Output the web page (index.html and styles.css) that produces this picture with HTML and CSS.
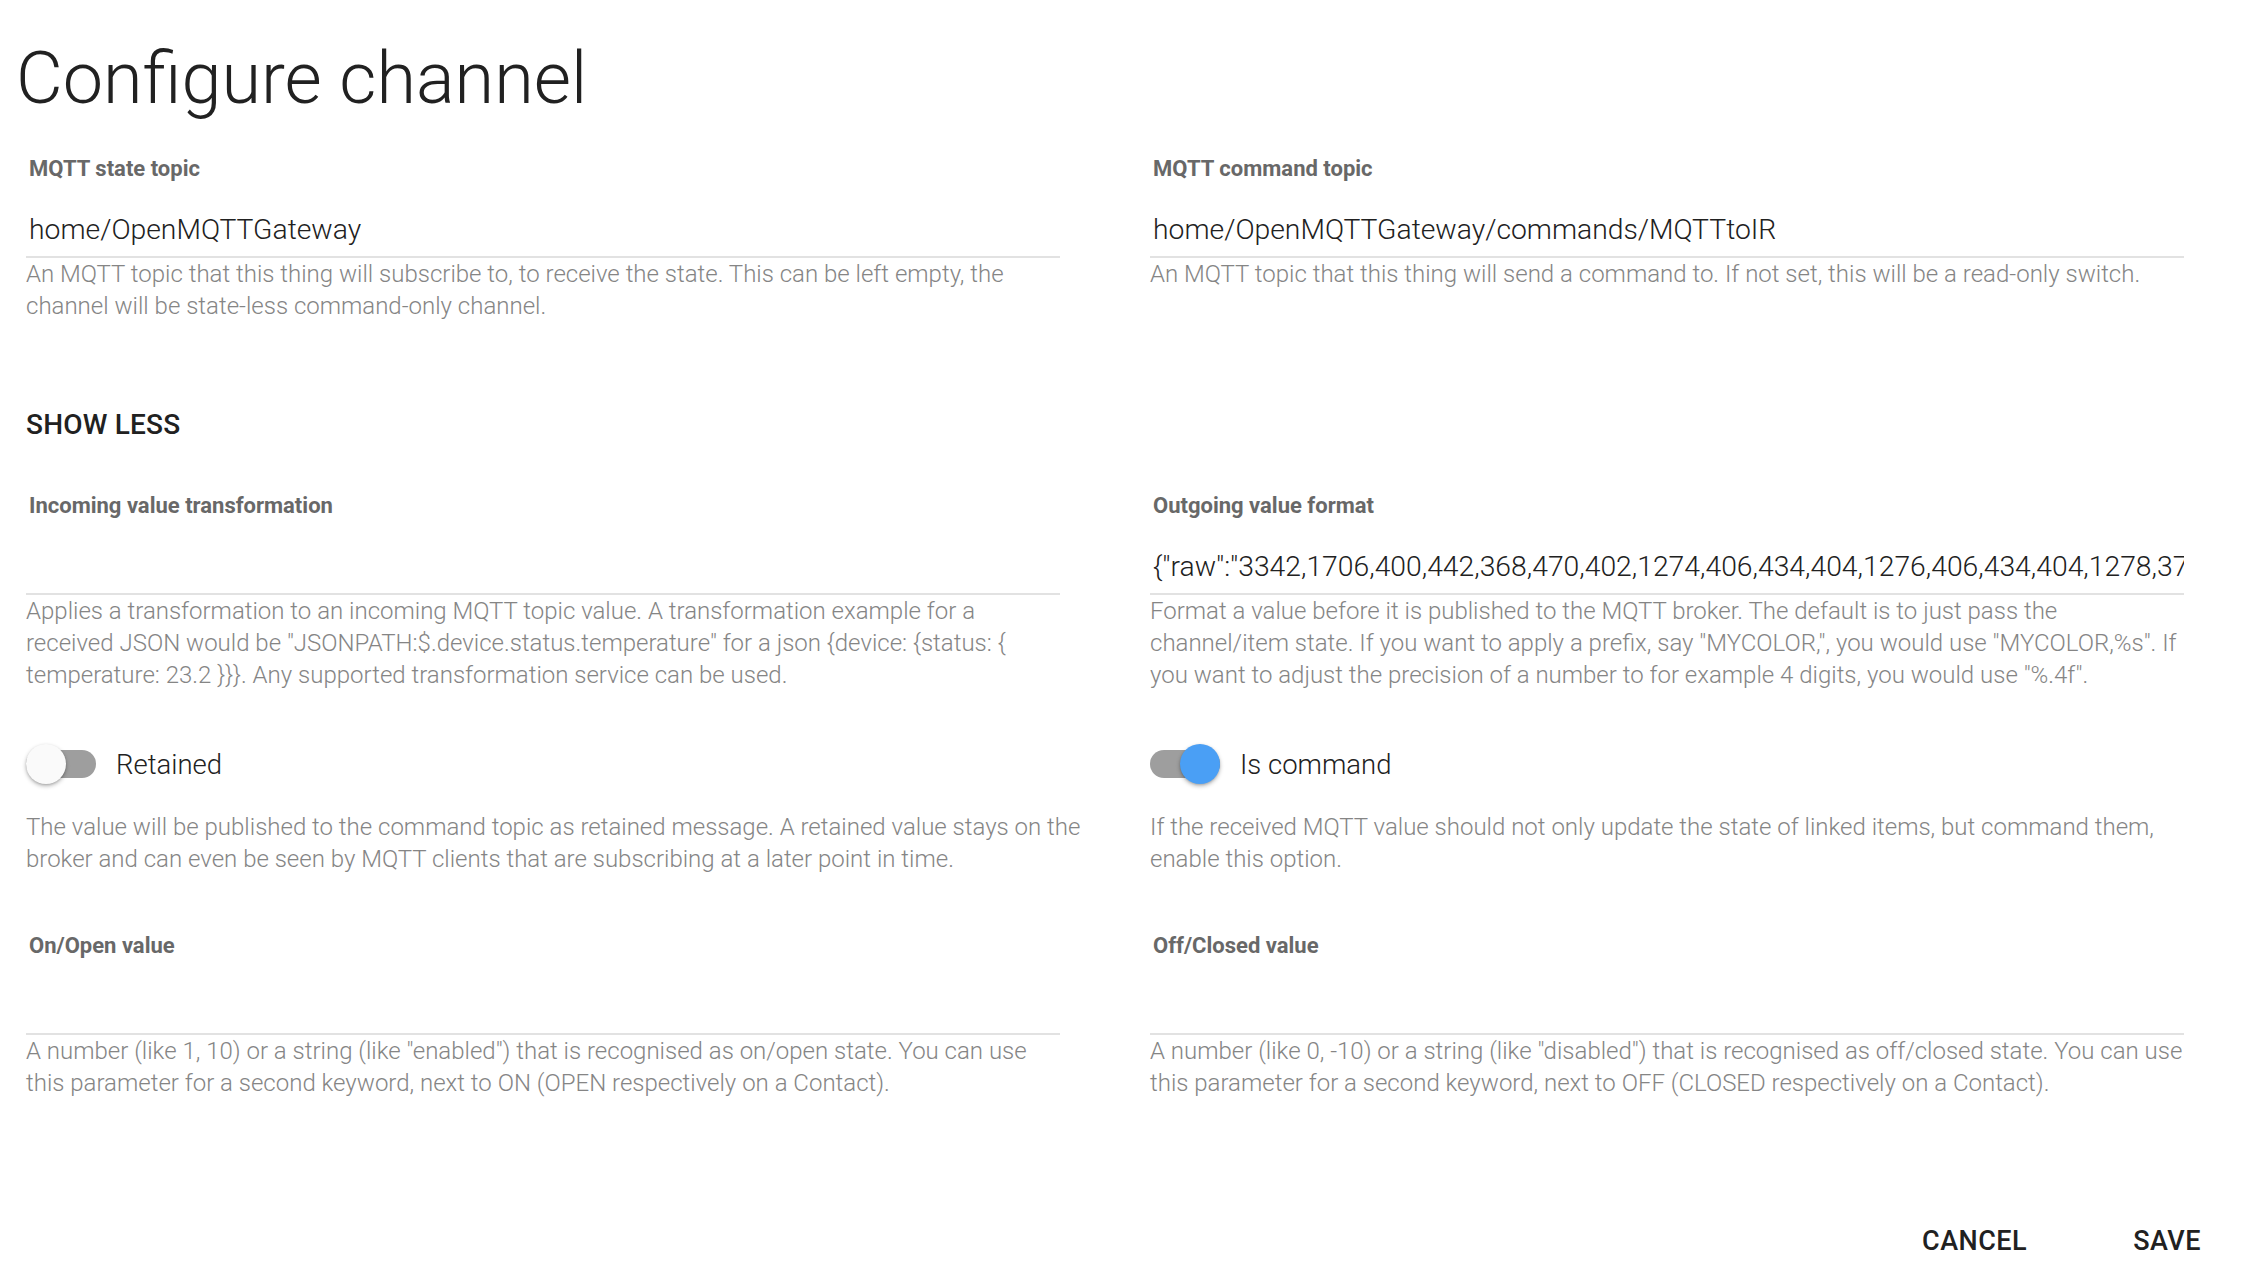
FILE: index.html
```html
<!DOCTYPE html>
<html lang="en">
<head>
<meta charset="utf-8">
<title>Configure channel</title>
<link rel="stylesheet" href="styles.css">
</head>
<body>
<div class="page">
  <h1 class="title">Configure channel</h1>

  <div class="grid row-1">
    <div class="field">
      <div class="label">MQTT state topic</div>
      <div class="input">home/OpenMQTTGateway</div>
      <div class="desc">An MQTT topic that this thing will subscribe to, to receive the state. This can be left empty, the channel will be state-less command-only channel.</div>
    </div>
    <div class="field">
      <div class="label">MQTT command topic</div>
      <div class="input">home/OpenMQTTGateway/commands/MQTTtoIR</div>
      <div class="desc">An MQTT topic that this thing will send a command to. If not set, this will be a read-only switch.</div>
    </div>
  </div>

  <div class="show-less">SHOW LESS</div>

  <div class="grid row-2">
    <div class="field">
      <div class="label">Incoming value transformation</div>
      <div class="input"></div>
      <div class="desc">Applies a transformation to an incoming MQTT topic value. A transformation example for a received JSON would be "JSONPATH:$.device.status.temperature" for a json {device: {status: { temperature: 23.2 }}}. Any supported transformation service can be used.</div>
    </div>
    <div class="field">
      <div class="label">Outgoing value format</div>
      <div class="input">{"raw":"3342,1706,400,442,368,470,402,1274,406,434,404,1276,406,434,404,1278,372,470,400,442,368,1306,402,440,370,470,400,1278,402,438,400"}</div>
      <div class="desc">Format a value before it is published to the MQTT broker. The default is to just pass the channel/item state. If you want to apply a prefix, say "MYCOLOR,", you would use "MYCOLOR,%s". If you want to adjust the precision of a number to for example 4 digits, you would use "%.4f".</div>
    </div>
  </div>

  <div class="grid row-3">
    <div class="toggle-field">
      <div class="toggle-row">
        <span class="switch"><span class="track"></span><span class="thumb"></span></span>
        <span class="toggle-label">Retained</span>
      </div>
      <div class="desc">The value will be published to the command topic as retained message. A retained value stays on the broker and can even be seen by MQTT clients that are subscribing at a later point in time.</div>
    </div>
    <div class="toggle-field">
      <div class="toggle-row">
        <span class="switch on"><span class="track"></span><span class="thumb"></span></span>
        <span class="toggle-label">Is command</span>
      </div>
      <div class="desc">If the received MQTT value should not only update the state of linked items, but command them, enable this option.</div>
    </div>
  </div>

  <div class="grid row-4">
    <div class="field">
      <div class="label">On/Open value</div>
      <div class="input"></div>
      <div class="desc">A number (like 1, 10) or a string (like "enabled") that is recognised as on/open state. You can use this parameter for a second keyword, next to ON (OPEN respectively on a Contact).</div>
    </div>
    <div class="field">
      <div class="label">Off/Closed value</div>
      <div class="input"></div>
      <div class="desc">A number (like 0, -10) or a string (like "disabled") that is recognised as off/closed state. You can use this parameter for a second keyword, next to OFF (CLOSED respectively on a Contact).</div>
    </div>
  </div>

  <div class="actions">
    <span class="btn">CANCEL</span>
    <span class="btn">SAVE</span>
  </div>
</div>
</body>
</html>
```

FILE: styles.css
```css
* { box-sizing: content-box; }
html, body {
  margin: 0;
  padding: 0;
  background: #ffffff;
}
body {
  font-family: Roboto, "Liberation Sans", sans-serif;
  color: #212121;
}
.page {
  padding: 0 50px 0 26px;
}
.title {
  margin: 36px 0 0 -10px;
  font-size: 72px;
  line-height: 86px;
  font-weight: 300;
  color: #212121;
}
.grid {
  display: grid;
  grid-template-columns: 1062px 1062px;
  column-gap: 62px;
}
.row-1 { margin-top: 35px; }
.row-2 { margin-top: 51px; }
.row-3 { margin-top: 53px; }
.row-4 { margin-top: 59px; }

.field {
  width: 1034px;
}
.label {
  font-size: 22px;
  line-height: 24px;
  font-weight: 700;
  color: #686868;
  padding-left: 3px;
  margin-bottom: 23px;
}
.input {
  height: 52px;
  line-height: 52px;
  font-size: 28.3px;
  font-weight: 300;
  color: #212121;
  padding-left: 3px;
  border-bottom: 2px solid #e2e2e2;
  white-space: nowrap;
  overflow: hidden;
}
.desc {
  font-size: 24px;
  line-height: 32px;
  font-weight: 300;
  color: #858585;
}
.show-less {
  margin-top: 85px;
  font-size: 28px;
  line-height: 36px;
  font-weight: 500;
  letter-spacing: 0.2px;
  color: #212121;
}
.toggle-row {
  display: flex;
  align-items: center;
  height: 40px;
  margin-bottom: 27px;
}
.switch {
  position: relative;
  width: 70px;
  height: 40px;
  flex: none;
}
.track {
  position: absolute;
  left: 0;
  top: 6px;
  width: 70px;
  height: 28px;
  border-radius: 14px;
  background: #9e9e9e;
}
.thumb {
  position: absolute;
  left: 0;
  top: 0;
  width: 40px;
  height: 40px;
  border-radius: 50%;
  background: #fafafa;
  box-shadow: 0 2px 4px rgba(0,0,0,0.28), 0 1px 2px rgba(0,0,0,0.12);
}
.switch.on .thumb {
  left: 30px;
  background: #4a9ff5;
}
.toggle-label {
  margin-left: 20px;
  font-size: 27.5px;
  font-weight: 300;
  color: #212121;
}
.actions {
  margin-top: 124px;
  display: flex;
  justify-content: flex-end;
  gap: 106px;
  padding-right: 11px;
}
.btn {
  font-size: 27px;
  line-height: 36px;
  font-weight: 500;
  letter-spacing: 0.5px;
  color: #212121;
}
```
